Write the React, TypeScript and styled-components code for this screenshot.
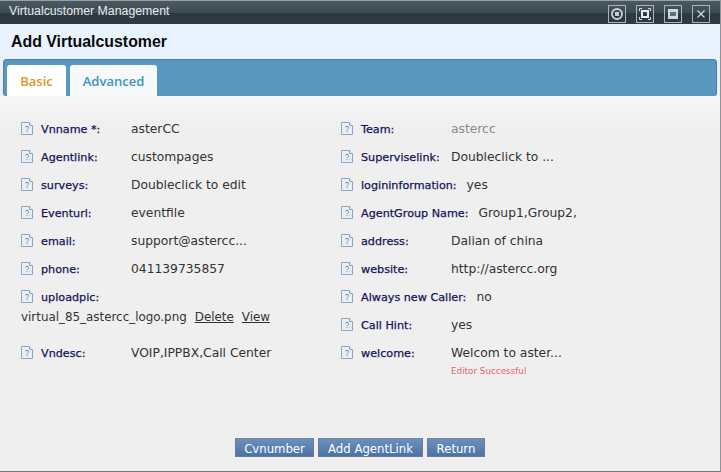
import React from 'react';
import styled, {createGlobalStyle} from 'styled-components';

const GlobalStyle = createGlobalStyle`
  html, body {
    margin: 0;
    padding: 0;
    background: #efefef;
  }
`;

type Field = {label: string; value?: string; muted?: boolean};

const leftFields: Field[] = [
  {label: 'Vnname *:', value: 'asterCC'},
  {label: 'Agentlink:', value: 'custompages'},
  {label: 'surveys:', value: 'Doubleclick to edit'},
  {label: 'Eventurl:', value: 'eventfile'},
  {label: 'email:', value: 'support@astercc...'},
  {label: 'phone:', value: '041139735857'},
];

const rightFields: Field[] = [
  {label: 'Team:', value: 'astercc', muted: true},
  {label: 'Superviselink:', value: 'Doubleclick to ...'},
  {label: 'logininformation:', value: 'yes'},
  {label: 'AgentGroup Name:', value: 'Group1,Group2,'},
  {label: 'address:', value: 'Dalian of china'},
  {label: 'website:', value: 'http://astercc.org'},
  {label: 'Always new Caller:', value: 'no'},
  {label: 'Call Hint:', value: 'yes'},
  {label: 'welcome:', value: 'Welcom to aster...'},
];

const HelpIcon: React.FC = () => (
  <IconBox viewBox="0 0 12 13" width="12" height="13">
    <path d="M.5.5h8l3 3v9H.5z" fill="#e9eff7" stroke="#93a4ba" />
    <path d="M8.5.5v3h3" fill="#fff" stroke="#93a4ba" />
    <path
      d="M4.3 5.2c.2-1 3.3-1.2 3.3.5 0 1.2-1.6 1.2-1.6 2.6"
      fill="none"
      stroke="#5b86c0"
      strokeWidth="1"
    />
    <rect x="5.5" y="9.2" width="1" height="1" fill="#5b86c0" />
  </IconBox>
);

const Row: React.FC<{field: Field}> = ({field}) => (
  <FieldRow>
    <HelpIcon />
    <Label>{field.label}</Label>
    <Value $muted={field.muted}>{field.value}</Value>
  </FieldRow>
);

const WindowButton: React.FC<{children: React.ReactNode}> = ({children}) => (
  <WinButton>
    <svg viewBox="0 0 18 18" width="18" height="18">
      {children}
    </svg>
  </WinButton>
);

const App: React.FC = () => (
  <Page>
    <GlobalStyle />
    <TitleBar>
      <TitleText>Virtualcustomer Management</TitleText>
      <WinButtons>
        <WindowButton>
          <circle cx="9" cy="9" r="5" fill="none" stroke="#c3cdd3" strokeWidth="2" />
          <rect x="7" y="7" width="4" height="4" fill="#c3cdd3" />
        </WindowButton>
        <WindowButton>
          <rect x="6" y="6" width="6" height="6" fill="none" stroke="#e4eaee" strokeWidth="2" />
          <path
            d="M3.5 6V3.5H6M12 3.5h2.5V6M14.5 12v2.5H12M6 14.5H3.5V12"
            fill="none"
            stroke="#d5dde2"
          />
        </WindowButton>
        <WindowButton>
          <rect x="4" y="4" width="10" height="10" fill="#cfd9df" />
          <rect x="6" y="7" width="6" height="4" fill="#5d6f7b" />
        </WindowButton>
        <WindowButton>
          <path d="M5.5 5.5l7 7M12.5 5.5l-7 7" stroke="#d5dde2" strokeWidth="1.1" fill="none" />
        </WindowButton>
      </WinButtons>
    </TitleBar>
    <Heading>Add Virtualcustomer</Heading>
    <TabStrip>
      <Tab $active>Basic</Tab>
      <Tab>Advanced</Tab>
    </TabStrip>
    <Content>
      <Columns>
        <Column>
          {leftFields.map((field) => (
            <Row key={field.label} field={field} />
          ))}
          <UploadBlock>
            <FieldRow>
              <HelpIcon />
              <Label>uploadpic:</Label>
            </FieldRow>
            <FileLine>
              virtual_85_astercc_logo.png
              <FileLink>Delete</FileLink>
              <FileLink>View</FileLink>
            </FileLine>
          </UploadBlock>
          <Row field={{label: 'Vndesc:', value: 'VOIP,IPPBX,Call Center'}} />
        </Column>
        <Column>
          {rightFields.map((field) => (
            <Row key={field.label} field={field} />
          ))}
          <Notice>Editor Successful</Notice>
        </Column>
      </Columns>
      <Actions>
        <ActionButton $width={79}>Cvnumber</ActionButton>
        <ActionButton $width={105}>Add AgentLink</ActionButton>
        <ActionButton $width={58}>Return</ActionButton>
      </Actions>
    </Content>
  </Page>
);
export default App;

const Page = styled.div`
  width: 721px;
  height: 472px;
  display: flex;
  flex-direction: column;
  overflow: hidden;
  background: #efefef;
  border-right: 1px solid #8f9498;
  border-bottom: 1px solid #777;
  box-sizing: border-box;
  font-family: 'DejaVu Sans', sans-serif;
`;

const TitleBar = styled.div`
  height: 24px;
  flex: none;
  box-sizing: border-box;
  display: flex;
  align-items: flex-start;
  justify-content: space-between;
  padding: 4px 10px 0 9px;
  border-top: 1px solid #9a9fa3;
  background: linear-gradient(#4a5961 0%, #3d4b53 50%, #2b383f 55%, #2e3b42 100%);
`;

const TitleText = styled.span`
  font-family: 'Liberation Sans', sans-serif;
  font-size: 12.3px;
  line-height: 13px;
  color: #e6eaed;
`;

const WinButtons = styled.div`
  display: flex;
  gap: 10px;
`;

const WinButton = styled.span`
  display: block;
  width: 18px;
  height: 18px;
  outline: 1px solid #a9b3b9;
  outline-offset: -1px;
`;

const Heading = styled.h1`
  margin: 0;
  height: 35px;
  flex: none;
  box-sizing: border-box;
  padding: 9px 0 0 11px;
  font-family: 'Liberation Sans', sans-serif;
  font-size: 15.9px;
  line-height: 18px;
  font-weight: bold;
  color: #0b0b0b;
  background: #e8f3fe;
`;

const TabStrip = styled.div`
  height: 37px;
  flex: none;
  box-sizing: border-box;
  margin: 0 3px 0 3px;
  padding: 5px 0 0 3px;
  display: flex;
  gap: 4px;
  background: #5b98bd;
  border: 1px solid #4482a8;
  border-bottom: none;
  border-radius: 4px 4px 3px 3px;
  align-items: flex-end;
`;

const Tab = styled.div<{$active?: boolean}>`
  height: 31px;
  box-sizing: border-box;
  display: flex;
  align-items: center;
  justify-content: center;
  width: ${(p) => (p.$active ? '59px' : '87px')};
  border-radius: 3px 3px 0 0;
  font-family: 'Open Sans', sans-serif;
  font-size: 13px;
  font-weight: 600;
  color: ${(p) => (p.$active ? '#e2922b' : '#3a94be')};
  background: ${(p) => (p.$active ? '#fff' : '#f6f8fa')};
`;

const Content = styled.div`
  flex: 1;
  display: flex;
  flex-direction: column;
  justify-content: space-between;
  padding: 24px 0 0 21px;
  background: linear-gradient(#f7f7f7 0, #efefef 30px);
`;

const Columns = styled.div`
  display: grid;
  grid-template-columns: 320px 1fr;
`;

const Column = styled.div`
  display: flex;
  flex-direction: column;
`;

const FieldRow = styled.div`
  height: 28px;
  display: flex;
  align-items: flex-start;
  padding-top: 1px;
  box-sizing: border-box;
`;

const IconBox = styled.svg`
  flex: none;
  margin: 1px 8px 0 0;
`;

const Label = styled.span`
  font-size: 11.2px;
  line-height: 17px;
  white-space: nowrap;
  color: #14145a;
  min-width: 90px;
  box-sizing: border-box;
  padding-right: 10px;
  -webkit-text-stroke: 0.25px #14145a;
`;

const Value = styled.span<{$muted?: boolean}>`
  font-size: 12.3px;
  line-height: 16px;
  white-space: nowrap;
  color: ${(p) => (p.$muted ? '#8a8a8a' : '#333')};
`;

const UploadBlock = styled.div`
  height: 56px;
  display: flex;
  flex-direction: column;
`;

const FileLine = styled.div`
  margin: -7px 0 0 0;
  font-size: 11.9px;
  line-height: 16px;
  color: #333;
  white-space: nowrap;
`;

const FileLink = styled.span`
  margin-left: 8px;
  text-decoration: underline;
`;

const Notice = styled.div`
  margin: -7px 0 0 110px;
  font-size: 8.8px;
  line-height: 12px;
  color: #e8636b;
`;

const Actions = styled.div`
  display: flex;
  gap: 4px;
  padding: 0 0 14px 214px;
`;

const ActionButton = styled.button<{$width: number}>`
  width: ${(p) => p.$width}px;
  height: 19px;
  padding: 3px 0 0;
  border: 1px solid #6d7c8c;
  border-top-color: #7a8794;
  background: linear-gradient(#6a90be, #4a74a6);
  color: #fff;
  font-family: 'DejaVu Sans', sans-serif;
  font-size: 11.7px;
  line-height: 14px;
`;
